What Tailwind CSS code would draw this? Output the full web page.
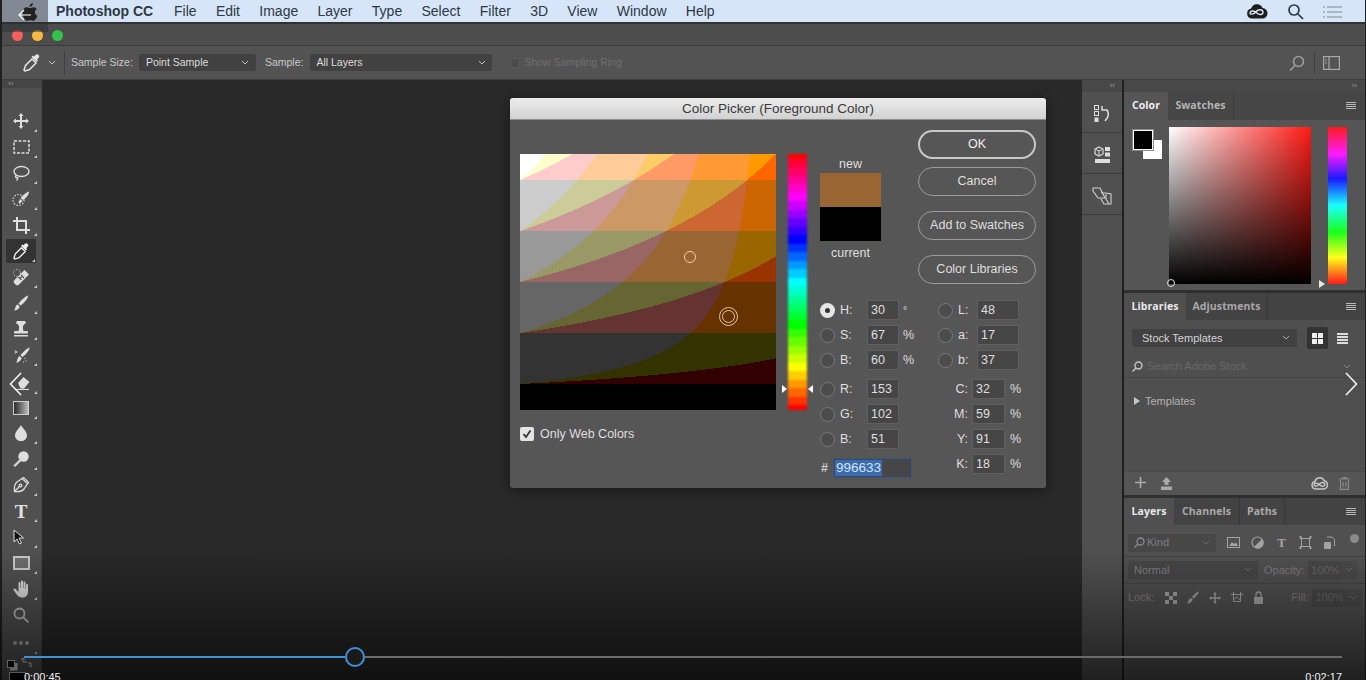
<!doctype html>
<html lang="en">
<head>
<meta charset="utf-8">
<title>Photoshop CC</title>
<script src="https://cdn.jsdelivr.net/npm/@tailwindcss/browser@4"></script>
</head>
<body class="m-0 bg-black">
<div class="relative w-[1366px] h-[680px] overflow-hidden flex flex-col pl-[2px] pr-[1px] bg-[#202020] font-['Liberation_Sans',sans-serif] blur-[0.35px]">

  <!-- macOS menu bar -->
  <header class="h-[24px] shrink-0 flex items-center justify-between pt-[1px] bg-[#d6e5f8] border-b-2 border-[#2f3336] text-[14px] text-[#2d3844]">
    <nav class="flex items-center gap-[19.3px] pl-[54px]">
      <span class="font-bold mr-[1.5px]">Photoshop CC</span>
      <span>File</span><span>Edit</span><span>Image</span><span>Layer</span><span>Type</span><span>Select</span><span>Filter</span><span>3D</span><span>View</span><span>Window</span><span>Help</span>
    </nav>
    <div class="flex items-center gap-[19px] pr-[23px]">
      <svg class="w-[22px] h-[16px]" viewBox="0 0 22 16"><path d="M6 14.5a5 5 0 0 1-.8-9.9A6 6 0 0 1 16.5 4a5.2 5.2 0 0 1-.5 10.5z" fill="#1d1d1d"/><path d="M4 9.5c0-3 4-3.4 6.500-.8s6.500 2.300 6.500-.5-4.500-3.500-7-.5-6 2.800-6 1.800z" fill="none" stroke="#d6e5f8" stroke-width="1.400"/></svg>
      <svg class="w-[17px] h-[17px]" viewBox="0 0 17 17" fill="none" stroke="#2d3844" stroke-width="1.700"><circle cx="7" cy="7" r="5"/><path d="M11 11l5 5"/></svg>
      <svg class="w-[19px] h-[14px]" viewBox="0 0 19 14" stroke="#9aa6b3" stroke-width="1.500"><path d="M0 2h2M4 2h15M0 7h2M4 7h15M0 12h2M4 12h15"/></svg>
    </div>
  </header>

  <!-- window title bar -->
  <div class="h-[22px] shrink-0 flex items-center gap-[9px] pl-[10px] pt-[2px] bg-[#4d4d4d] border-b border-[#393939]">
    <span class="w-[11px] h-[11px] rounded-full bg-[#f55f5b]"></span>
    <span class="w-[11px] h-[11px] rounded-full bg-[#f7b93f]"></span>
    <span class="w-[11px] h-[11px] rounded-full bg-[#35c24a]"></span>
  </div>

  <!-- options bar -->
  <div class="h-[34px] shrink-0 flex items-center bg-[#535353] border-b border-[#3f3f3f] text-[10.5px] text-[#c9c9c9]">
    <svg class="w-[18px] h-[18px] ml-[21px]" viewBox="0 0 18 18"><path d="M11 2.500l1.500-1.500a2 2 0 0 1 3 3L14 5.500l1 1-1.500 1.500-5-5L10 1.500z" fill="#e5e5e5"/><path d="M9 5l-6.500 6.500L1 16l1 1 4.500-1.500L13 9z" fill="none" stroke="#e5e5e5" stroke-width="1.500"/></svg>
    <svg class="w-[8px] h-[6px] ml-[7px]" viewBox="0 0 8 6" fill="none" stroke="#bdbdbd"><path d="M1 1l3 3 3-3"/></svg>
    <span class="w-px h-[24px] bg-[#3e3e3e] ml-[8px]"></span>
    <span class="ml-[6px]">Sample Size:</span>
    <div class="ml-[6px] w-[117px] h-[17px] flex items-center justify-between px-[7px] bg-[#414141] rounded-[2px] text-[#dcdcdc]">Point Sample<svg class="w-[8px] h-[6px]" viewBox="0 0 8 6" fill="none" stroke="#c0c0c0"><path d="M1 1l3 3 3-3"/></svg></div>
    <span class="ml-[9px]">Sample:</span>
    <div class="ml-[7px] w-[182px] h-[17px] flex items-center justify-between px-[6px] bg-[#414141] rounded-[2px] text-[#dcdcdc]">All Layers<svg class="w-[8px] h-[6px]" viewBox="0 0 8 6" fill="none" stroke="#c0c0c0"><path d="M1 1l3 3 3-3"/></svg></div>
    <span class="ml-[18px] w-[10px] h-[10px] rounded-[2px] bg-[#4c4c4c] border border-[#5a5a5a]"></span>
    <span class="ml-[4px] text-[#6f6f6f]">Show Sampling Ring</span>
    <div class="ml-auto flex items-center pr-[25px]">
      <svg class="w-[16px] h-[16px]" viewBox="0 0 16 16" fill="none" stroke="#9c9c9c" stroke-width="1.600"><circle cx="9.500" cy="6.500" r="5"/><path d="M6 10.500L1 15.500"/></svg>
      <span class="w-px h-[22px] bg-[#3e3e3e] ml-[9px]"></span>
      <svg class="w-[17px] h-[14px] ml-[8px]" viewBox="0 0 17 14" fill="none" stroke="#a8a8a8" stroke-width="1.200"><rect x=".6" y=".6" width="15.800" height="12.800"/><path d="M6 .6v12.800"/><path d="M2 4h2M2 7h2" /></svg>
    </div>
  </div>

  <!-- workspace -->
  <main class="flex-1 min-h-0 flex">

    <!-- tool bar -->
    <aside class="w-[40px] shrink-0 bg-[#505050] border-r border-[#454545] flex flex-col items-center">
      <div class="w-full h-[12px] bg-[#454545] flex items-center pl-[6px] text-[8px] leading-none text-[#a0a0a0]">››</div>
      <div class="flex flex-col items-center mt-[16px] pt-[4px] w-[30px] ml-[-1px] text-[#dedede]">
        <div class="relative h-[26px] w-[30px] flex items-center justify-center"><svg class="w-[16px] h-[16px]" viewBox="0 0 16 16" fill="currentColor"><path d="M8 0l2.500 3H9v4h4V5.500L16 8l-3 2.500V9H9v4h1.500L8 16l-2.500-3H7V9H3v1.500L0 8l3-2.500V7h4V3H5.500z"/></svg><i class="absolute right-[-1px] bottom-[2px] border-b-[3px] border-l-[3px] border-b-[#cfcfcf] border-l-transparent"></i></div>
        <div class="relative h-[26px] w-[30px] flex items-center justify-center"><svg class="w-[17px] h-[14px]" viewBox="0 0 17 14" fill="none" stroke="currentColor" stroke-width="1.500" stroke-dasharray="3 1.500"><rect x="1" y="1" width="15" height="12"/></svg><i class="absolute right-[-1px] bottom-[2px] border-b-[3px] border-l-[3px] border-b-[#cfcfcf] border-l-transparent"></i></div>
        <div class="relative h-[26px] w-[30px] flex items-center justify-center"><svg class="w-[18px] h-[16px]" viewBox="0 0 18 16" fill="none" stroke="currentColor" stroke-width="1.400"><ellipse cx="9.500" cy="6.500" rx="7.500" ry="5"/><path d="M4.500 10c-1.500 1-1 3 .5 2.500s.5 2-.5 3"/></svg><i class="absolute right-[-1px] bottom-[2px] border-b-[3px] border-l-[3px] border-b-[#cfcfcf] border-l-transparent"></i></div>
        <div class="relative h-[26px] w-[30px] flex items-center justify-center"><svg class="w-[18px] h-[16px]" viewBox="0 0 18 16"><circle cx="6.500" cy="9" r="5.500" fill="none" stroke="currentColor" stroke-width="1.200" stroke-dasharray="1.500 1.500"/><path d="M17 .5c.5 2-3 7-6 8.500l-2.500-2C11 4 15 1 17 .5z" fill="currentColor"/><path d="M8 8l2.500 2-3 3-1-1.500z" fill="currentColor"/></svg><i class="absolute right-[-1px] bottom-[2px] border-b-[3px] border-l-[3px] border-b-[#cfcfcf] border-l-transparent"></i></div>
        <div class="relative h-[26px] w-[30px] flex items-center justify-center"><svg class="w-[17px] h-[17px]" viewBox="0 0 17 17" fill="none" stroke="currentColor" stroke-width="2"><path d="M0 4h13v13M4 0v13h13"/></svg><i class="absolute right-[-1px] bottom-[2px] border-b-[3px] border-l-[3px] border-b-[#cfcfcf] border-l-transparent"></i></div>
        <div class="relative h-[24px] my-[1px] w-[30px] flex items-center justify-center bg-[#333333] rounded-[1px]"><svg class="w-[17px] h-[17px]" viewBox="0 0 18 18"><path d="M11 2.500l1.500-1.500a2 2 0 0 1 3 3L14 5.500l1 1-1.500 1.500-5-5L10 1.500z" fill="#eee"/><path d="M9 5l-6.500 6.500L1 16l1 1 4.500-1.500L13 9z" fill="none" stroke="#eee" stroke-width="1.500"/></svg><i class="absolute right-[1px] bottom-[1px] border-b-[3px] border-l-[3px] border-b-[#cfcfcf] border-l-transparent"></i></div>
        <div class="relative h-[26px] w-[30px] flex items-center justify-center"><svg class="w-[18px] h-[17px]" viewBox="0 0 18 17"><path d="M12.500 1l4.500 4.500L7 15.500a2.500 2.500 0 0 1-3.500 0l-1-1a2.500 2.500 0 0 1 0-3.500z" fill="currentColor"/><path d="M6.500 8l3 3M9 6l3 3M8 9.500l1.500-1.500" stroke="#505050" stroke-width="1.200"/><circle cx="5" cy="4" r="3.500" fill="none" stroke="currentColor" stroke-dasharray="1 1.500"/></svg><i class="absolute right-[-1px] bottom-[2px] border-b-[3px] border-l-[3px] border-b-[#cfcfcf] border-l-transparent"></i></div>
        <div class="relative h-[26px] w-[30px] flex items-center justify-center"><svg class="w-[16px] h-[16px]" viewBox="0 0 16 16" fill="currentColor"><path d="M15 .5c.5 2-3.500 7.500-7.500 10L5.500 8.500C8 5 13 1 15 .5z"/><path d="M4.700 9.500l2 2c-.5 2.500-3 4-6 4 1.500-1 1.500-2.500 2-4 .3-1 1-1.700 2-2z"/></svg><i class="absolute right-[-1px] bottom-[2px] border-b-[3px] border-l-[3px] border-b-[#cfcfcf] border-l-transparent"></i></div>
        <div class="relative h-[26px] w-[30px] flex items-center justify-center"><svg class="w-[16px] h-[16px]" viewBox="0 0 16 16" fill="currentColor"><path d="M5 0h6a1.500 1.500 0 0 1 .5 3L10 5c-.3 1.500 0 3 .5 5H14a1 1 0 0 1 1 1v1.500H1V11a1 1 0 0 1 1-1h3.500c.5-2 .8-3.500.5-5L4.500 3A1.500 1.500 0 0 1 5 0z"/><rect x="1" y="14" width="14" height="1.500"/></svg><i class="absolute right-[-1px] bottom-[2px] border-b-[3px] border-l-[3px] border-b-[#cfcfcf] border-l-transparent"></i></div>
        <div class="relative h-[26px] w-[30px] flex items-center justify-center"><svg class="w-[17px] h-[17px]" viewBox="0 0 17 17" fill="currentColor"><path d="M16.500.5c.5 2-3.500 7-7 9.500L7.500 8C10 5 14.500 1 16.500.5z"/><path d="M6.700 9l2 2c-.5 2.500-3 4.500-5.700 5 1-1 1-2.500 1.500-4 .3-1.200 1-2.500 2.200-3z"/><path d="M1 3l4 2-4 2 1.500-2z"/><path d="M12 11v1M13 13.500v1M10.500 14.500v1" stroke="currentColor"/></svg><i class="absolute right-[-1px] bottom-[2px] border-b-[3px] border-l-[3px] border-b-[#cfcfcf] border-l-transparent"></i></div>
        <div class="relative h-[28px] w-[30px] flex items-center justify-center pt-[2px]"><svg class="w-[18px] h-[14px]" viewBox="0 0 18 14"><path d="M6 7l5.500-6 6 5L12 12.500H8.500z" fill="currentColor"/><path d="M4 13.500h13" stroke="currentColor" stroke-width="1.200"/></svg><i class="absolute right-[-1px] bottom-[2px] border-b-[3px] border-l-[3px] border-b-[#cfcfcf] border-l-transparent"></i></div>
        <div class="relative h-[24px] w-[30px] flex items-center justify-center"><div class="w-[16px] h-[14px] border border-[#cfcfcf] bg-gradient-to-r from-[#2d2d2d] to-[#bdbdbd]"></div><i class="absolute right-[-1px] bottom-[1px] border-b-[3px] border-l-[3px] border-b-[#cfcfcf] border-l-transparent"></i></div>
        <div class="relative h-[26px] w-[30px] flex items-center justify-center"><svg class="w-[12px] h-[16px]" viewBox="0 0 12 16" fill="currentColor"><path d="M6 0c1 2.500 6 6.500 6 10.500A5.700 5.500 0 0 1 0 10.500C0 6.500 5 2.500 6 0z"/></svg><i class="absolute right-[-1px] bottom-[2px] border-b-[3px] border-l-[3px] border-b-[#cfcfcf] border-l-transparent"></i></div>
        <div class="relative h-[26px] w-[30px] flex items-center justify-center"><svg class="w-[16px] h-[16px]" viewBox="0 0 16 16" fill="currentColor"><circle cx="10.500" cy="5.500" r="5.200"/><path d="M6.500 9L1 14.500l1 1L7.500 10z" stroke="currentColor"/></svg><i class="absolute right-[-1px] bottom-[2px] border-b-[3px] border-l-[3px] border-b-[#cfcfcf] border-l-transparent"></i></div>
        <div class="relative h-[26px] w-[30px] flex items-center justify-center"><svg class="w-[16px] h-[16px]" viewBox="0 0 16 16" fill="none" stroke="currentColor" stroke-width="1.300"><path d="M1.500 14.500C1 10 2 6.500 4 5l5-3.500 5.500 5L11 12c-1.500 2-5 3-9.500 2.500zM1.500 14.500l5-5"/><circle cx="7.500" cy="8.500" r="1.300"/><path d="M9 1.500l1.500-1 5 4.800-.8 1.500" /></svg><i class="absolute right-[-1px] bottom-[2px] border-b-[3px] border-l-[3px] border-b-[#cfcfcf] border-l-transparent"></i></div>
        <div class="relative h-[26px] w-[30px] flex items-center justify-center"><span class="font-['Liberation_Serif',serif] font-bold text-[19px] leading-none text-[#e2e2e2]">T</span><i class="absolute right-[-1px] bottom-[2px] border-b-[3px] border-l-[3px] border-b-[#cfcfcf] border-l-transparent"></i></div>
        <div class="relative h-[26px] w-[30px] flex items-center justify-center"><svg class="w-[13px] h-[16px] -ml-[4px]" viewBox="0 0 13 16"><path d="M1 1v12l3-3 2.500 5 2-1L6 9h4.500z" fill="#111" stroke="#ddd"/></svg><i class="absolute right-[-1px] bottom-[2px] border-b-[3px] border-l-[3px] border-b-[#cfcfcf] border-l-transparent"></i></div>
        <div class="relative h-[26px] w-[30px] flex items-center justify-center"><div class="w-[17px] h-[14px] border-2 border-[#c9c9c9] bg-[#6d6d6d]"></div><i class="absolute right-[-1px] bottom-[2px] border-b-[3px] border-l-[3px] border-b-[#cfcfcf] border-l-transparent"></i></div>
        <div class="relative h-[26px] w-[30px] flex items-center justify-center"><svg class="w-[17px] h-[18px]" viewBox="0 0 17 18" fill="currentColor"><path d="M6.500 2a1 1 0 0 1 1 1v5h.5V1.500a1 1 0 0 1 2 0V8h.5V2.500a1 1 0 0 1 2 0V9h.5V5a1 1 0 0 1 2 0v7c0 3.500-2.500 5.500-5.500 5.500S4.500 16 3 13.500L.5 10a1.200 1.200 0 0 1 2-1.200L5.500 12V3a1 1 0 0 1 1-1z"/></svg><i class="absolute right-[-1px] bottom-[2px] border-b-[3px] border-l-[3px] border-b-[#cfcfcf] border-l-transparent"></i></div>
        <div class="relative h-[26px] w-[30px] flex items-center justify-center"><svg class="w-[16px] h-[16px]" viewBox="0 0 16 16" fill="none" stroke="#bdbdbd" stroke-width="1.800"><circle cx="6.500" cy="6.500" r="5"/><path d="M10.500 10.500l5 5"/></svg></div>
        <div class="relative h-[28px] w-[30px] flex items-center justify-center pt-[2px]"><span class="flex gap-[2px]"><i class="w-[4px] h-[4px] rounded-full bg-[#a8a8a8]"></i><i class="w-[4px] h-[4px] rounded-full bg-[#a8a8a8]"></i><i class="w-[4px] h-[4px] rounded-full bg-[#a8a8a8]"></i></span><i class="absolute right-[-1px] bottom-[2px] border-b-[3px] border-l-[3px] border-b-[#cfcfcf] border-l-transparent"></i></div>
        <div class="w-[30px] flex justify-between items-start pl-[1px] pr-[4px] mt-[1px]">
          <svg class="w-[11px] h-[11px] mt-[3px]" viewBox="0 0 11 11"><rect x="3" y="3" width="7.500" height="7.500" fill="#ddd"/><rect x=".5" y=".5" width="7" height="7" fill="#111" stroke="#ccc"/></svg>
          <svg class="w-[11px] h-[11px]" viewBox="0 0 11 11" fill="none" stroke="#ddd"><path d="M0 3l2-2 2 2M2 1v4h4M7 6h3v2M8 8l2 2 1-2"/></svg>
        </div>
        <div class="w-[17px] h-[10px] bg-black border border-[#ccc] mt-[1px] -ml-[8px]"></div>
      </div>
    </aside>

    <!-- canvas area -->
    <section class="flex-1 min-w-0 bg-[#292929]"></section>

    <!-- collapsed dock -->
    <aside class="w-[40px] shrink-0 bg-[#505050] flex flex-col">
      <div class="h-[12px] bg-[#484848] flex items-center justify-end pr-[7px] text-[8px] leading-none text-[#a0a0a0]">‹‹</div>
      <div class="h-[41px] pt-[3px] border-b border-[#3d3d3d] flex items-center justify-center"><svg class="w-[16px] h-[18px]" viewBox="0 0 16 18"><rect x=".5" y=".5" width="4" height="4" fill="none" stroke="#ddd"/><rect x=".5" y="6.500" width="4" height="4" fill="none" stroke="#ddd"/><rect x=".5" y="12.500" width="4" height="4.500" fill="#ddd"/><path d="M8 1v4h5c2.500 4 1 8-2 11" fill="none" stroke="#ddd" stroke-width="1.500"/></svg></div>
      <div class="h-[41px] pt-[3px] border-b border-[#3d3d3d] flex items-center justify-center"><svg class="w-[17px] h-[17px]" viewBox="0 0 17 17"><path d="M5 1l4 2v5l-4 2-4-2V3z" fill="none" stroke="#ddd" stroke-width="1.200"/><path d="M5 5v4M2 3.500l3 1.500 3-1.500" stroke="#ddd" fill="none"/><rect x="11" y="1" width="5" height="4" fill="#ddd"/><rect x="11" y="6.500" width="5" height="4" fill="#ddd"/><rect x="1" y="13" width="15" height="4" fill="#ddd"/></svg></div>
      <div class="h-[41px] pt-[3px] border-b border-[#3d3d3d] flex items-center justify-center"><svg class="w-[20px] h-[18px]" viewBox="0 0 20 18" fill="none" stroke="#d0d0d0" stroke-width="1.100"><path d="M1 1h7l5 10v0H6L1 4z"/><path d="M9 6h5l5 1v10h-7L9 12"/><path d="M14 7v5l3 5"/></svg></div>
    </aside>

    <!-- panels -->
    <aside class="w-[241px] ml-[2px] shrink-0 bg-[#2f2f2f] flex flex-col text-[#c6c6c6]">
      <div class="h-[12px] bg-[#484848] flex items-center justify-end pr-[8px] text-[8px] leading-none text-[#a0a0a0]">››</div>

      <!-- Color -->
      <section class="h-[198px] bg-[#555555] flex flex-col">
        <div class="h-[28px] shrink-0 flex bg-[#464646] font-['Open_Sans',sans-serif] text-[10.500px] font-bold tracking-[0.1px]">
          <div class="w-[44px] flex items-center justify-center bg-[#555555] text-[#eeeeee]">Color</div>
          <div class="w-[66px] flex items-center justify-center border-r border-[#3c3c3c] text-[#b4b4b4]">Swatches</div>
          <div class="ml-auto pr-[9px] flex items-center"><svg class="w-[10px] h-[8px]" viewBox="0 0 10 8" stroke="#b8b8b8"><path d="M0 .5h10M0 2.500h10M0 4.500h10M0 6.500h10"/></svg></div>
        </div>
        <div class="flex pt-[7px]">
          <div class="relative w-[45px] h-[36px]">
            <div class="absolute left-[19px] top-[13px] w-[19px] h-[19px] bg-white"></div>
            <div class="absolute left-[9px] top-[3px] w-[20px] h-[20px] bg-black border border-white outline outline-[#8a8a8a]"></div>
          </div>
          <div class="relative w-[142px] h-[157px] bg-[linear-gradient(to_bottom,transparent,#000),linear-gradient(to_right,#fff,#ff1a14)]">
            <span class="absolute left-[-2px] bottom-[-3px] w-[8px] h-[8px] rounded-full border border-[#ddd]"></span>
          </div>
          <div class="relative ml-[17px] w-[19px] h-[157px] bg-[linear-gradient(to_bottom,#ff1a1a,#ff1aff_17%,#1a1aff_33%,#1affff_50%,#1aff1a_67%,#ffff1a_83%,#ff1a1a)]">
            <i class="absolute left-[-9px] bottom-[-4px] border-y-[4px] border-l-[6px] border-y-transparent border-l-[#e8e8e8]"></i>
          </div>
        </div>
      </section>

      <!-- Libraries -->
      <section class="h-[202px] mt-[3px] bg-[#4f4f4f] flex flex-col">
        <div class="h-[27px] shrink-0 flex bg-[#434343] font-['Open_Sans',sans-serif] text-[10.500px] font-bold tracking-[0.1px]">
          <div class="w-[62px] flex items-center justify-center bg-[#4f4f4f] text-[#e8e8e8]">Libraries</div>
          <div class="w-[82px] flex items-center justify-center border-r border-[#383838] text-[#a8a8a8]">Adjustments</div>
          <div class="ml-auto pr-[9px] flex items-center"><svg class="w-[10px] h-[8px]" viewBox="0 0 10 8" stroke="#b8b8b8"><path d="M0 .5h10M0 2.500h10M0 4.500h10M0 6.500h10"/></svg></div>
        </div>
        <div class="flex items-center h-[36px] pl-[8px] text-[11px]">
          <div class="w-[165px] h-[18px] flex items-center justify-between pl-[10px] pr-[7px] bg-[#414141] rounded-[2px] text-[#d4d4d4]">Stock Templates<svg class="w-[8px] h-[6px]" viewBox="0 0 8 6" fill="none" stroke="#a8a8a8"><path d="M1 1l3 3 3-3"/></svg></div>
          <div class="ml-[10px] w-[21px] h-[22px] flex items-center justify-center bg-[#333333] rounded-[2px]"><svg class="w-[11px] h-[11px]" viewBox="0 0 11 11" fill="#eee"><rect width="5" height="5"/><rect x="6" width="5" height="5"/><rect y="6" width="5" height="5"/><rect x="6" y="6" width="5" height="5"/></svg></div>
          <svg class="w-[11px] h-[11px] ml-[9px]" viewBox="0 0 11 11" fill="#ddd"><rect width="11" height="2"/><rect y="3" width="11" height="2"/><rect y="6" width="11" height="2"/><rect y="9" width="11" height="2"/></svg>
        </div>
        <div class="h-[22px] border-b border-[#444444] flex items-center pl-[8px] pr-[14px] text-[11px] text-[#686868]">
          <svg class="w-[11px] h-[11px] mr-[4px]" viewBox="0 0 11 11" fill="none" stroke="#c4c4c4" stroke-width="1.400"><circle cx="6.500" cy="4.500" r="3.500"/><path d="M4 7l-3.500 3.500"/></svg>
          Search Adobe Stock
          <svg class="w-[8px] h-[6px] ml-auto" viewBox="0 0 8 6" fill="none" stroke="#888"><path d="M1 1l3 3 3-3"/></svg>
        </div>
        <div class="flex items-center h-[46px] pl-[10px] text-[11px] text-[#b2b2b2]"><i class="border-y-[4px] border-l-[6px] border-y-transparent border-l-[#c4c4c4] mr-[5px]"></i>Templates</div>
        <div class="mt-auto h-[24px] shrink-0 flex items-center px-[11px] bg-[#555555] border-t border-[#4a4a4a]">
          <svg class="w-[13px] h-[13px]" viewBox="0 0 13 13" stroke="#aaa" stroke-width="1.600"><path d="M5.500 0v11M0 5.500h11"/></svg>
          <svg class="w-[13px] h-[13px] ml-[12px]" viewBox="0 0 13 13" fill="#aaa"><path d="M6.500 0l4.500 5H8.500v3h-4V5H2zM1 9.500h11V13H1z"/></svg>
          <svg class="w-[17px] h-[13px] ml-auto" viewBox="0 0 17 13" fill="none" stroke="#c8c8c8" stroke-width="1.400"><path d="M4.500 12a3.800 3.800 0 0 1-.5-7.500A4.800 4.800 0 0 1 13 3.500 4.300 4.300 0 0 1 12.500 12z"/><path d="M3 8c0-2 3-2.500 5.500-.3S14 9.500 14 7.500 11 4.500 8.500 7 4 10 3 8z"/></svg>
          <svg class="w-[11px] h-[13px] ml-[11px] mr-[4px]" viewBox="0 0 11 13" fill="none" stroke="#8a8a8a" stroke-width="1.200"><path d="M1.500 3v9.400h8V3M0 2h11M4 2V.6h3V2M4 5v5M7 5v5"/></svg>
        </div>
      </section>

      <!-- Layers -->
      <section class="flex-1 mt-[3px] bg-[#505050] flex flex-col text-[11px] text-[#7d7d7d]">
        <div class="h-[27px] shrink-0 flex bg-[#434343] font-['Open_Sans',sans-serif] text-[10.500px] font-bold tracking-[0.1px]">
          <div class="w-[50px] flex items-center justify-center bg-[#505050] text-[#e8e8e8]">Layers</div>
          <div class="w-[66px] flex items-center justify-center border-r border-[#383838] text-[#aaaaaa]">Channels</div>
          <div class="w-[45px] flex items-center justify-center border-r border-[#383838] text-[#aaaaaa]">Paths</div>
          <div class="ml-auto pr-[9px] flex items-center"><svg class="w-[10px] h-[8px]" viewBox="0 0 10 8" stroke="#b8b8b8"><path d="M0 .5h10M0 2.500h10M0 4.500h10M0 6.500h10"/></svg></div>
        </div>
        <div class="relative flex items-center h-[32px] pt-[4px] pl-[4px] border-b border-[#454545]">
          <div class="w-[88px] h-[18px] flex items-center justify-between px-[6px] bg-[#474747] rounded-[2px] text-[#7f7f7f]"><span class="flex items-center gap-[2px]"><svg class="w-[11px] h-[11px]" viewBox="0 0 11 11" fill="none" stroke="#8c8c8c" stroke-width="1.300"><circle cx="6.500" cy="4.500" r="3.500"/><path d="M4 7l-3.500 3.500"/></svg>Kind</span><svg class="w-[8px] h-[6px]" viewBox="0 0 8 6" fill="none" stroke="#6c6c6c"><path d="M1 1l3 3 3-3"/></svg></div>
          <div class="flex items-center ml-[11px] gap-[11px] text-[#a3a3a3]">
            <svg class="w-[13px] h-[11px]" viewBox="0 0 13 11"><rect x=".5" y=".5" width="12" height="10" fill="none" stroke="#a3a3a3"/><path d="M2 9l3-4 2 2 2-1.500L11 9z" fill="#a3a3a3"/></svg>
            <svg class="w-[13px] h-[13px]" viewBox="0 0 13 13"><circle cx="6.500" cy="6.500" r="5.500" fill="none" stroke="#a3a3a3" stroke-width="1.200"/><path d="M11 3a5.500 5.500 0 0 1-8 8z" fill="#a3a3a3"/></svg>
            <span class="font-['Liberation_Serif',serif] font-bold text-[13px] w-[13px] text-center leading-none">T</span>
            <svg class="w-[13px] h-[13px]" viewBox="0 0 13 13" fill="none" stroke="#a3a3a3"><rect x="2.500" y="2.500" width="8" height="8"/><path d="M0 1h3M1.500 0v3M10 1h3M11.500 0v3M0 12h3M1.500 10v3M10 12h3M11.500 10v3"/></svg>
            <svg class="w-[12px] h-[14px]" viewBox="0 0 12 14"><path d="M4 1h5l2.500 2.500V10" fill="none" stroke="#a3a3a3"/><rect x="1" y="6" width="7" height="7" rx="1" fill="#a3a3a3"/></svg>
          </div>
          <div class="absolute right-[6px] top-[9px] w-[9px] h-[9px] rounded-full bg-[#8a8a8a]"></div>
        </div>
        <div class="flex items-center h-[27px] pl-[4px] border-b border-[#454545]">
          <div class="w-[130px] h-[18px] flex items-center justify-between px-[6px] bg-[#474747] rounded-[2px] text-[#7f7f7f]">Normal<svg class="w-[8px] h-[6px]" viewBox="0 0 8 6" fill="none" stroke="#6c6c6c"><path d="M1 1l3 3 3-3"/></svg></div>
          <span class="ml-[6px]">Opacity:</span>
          <div class="ml-[4px] w-[33px] h-[18px] flex items-center pl-[3px] bg-[#474747] text-[#666]">100%</div>
          <div class="w-[16px] h-[18px] flex items-center justify-center bg-[#4a4a4a]"><svg class="w-[8px] h-[6px]" viewBox="0 0 8 6" fill="none" stroke="#6c6c6c"><path d="M1 1l3 3 3-3"/></svg></div>
        </div>
        <div class="flex items-center h-[27px] pl-[4px]">
          <span>Lock:</span>
          <div class="flex items-center ml-[11px] gap-[10px]">
            <svg class="w-[12px] h-[12px]" viewBox="0 0 12 12" fill="#a3a3a3"><rect width="4" height="4"/><rect x="8" width="4" height="4"/><rect x="4" y="4" width="4" height="4"/><rect y="8" width="4" height="4"/><rect x="8" y="8" width="4" height="4"/></svg>
            <svg class="w-[12px] h-[13px]" viewBox="0 0 12 13" fill="#a3a3a3"><path d="M11.500.5c.3 1.500-2.500 5-5 7L5 6c2-2.500 5-5 6.500-5.500z"/><path d="M4 7l1.800 1.500C5.500 10.500 3 12.500 0 12.800c1-.8 1.200-2 1.500-3.300C2 8.300 3 7.500 4 7z"/></svg>
            <svg class="w-[12px] h-[12px]" viewBox="0 0 16 16" fill="#a3a3a3"><path d="M8 0l2.500 3H9v4h4V5.500L16 8l-3 2.500V9H9v4h1.500L8 16l-2.500-3H7V9H3v1.500L0 8l3-2.500V7h4V3H5.500z"/></svg>
            <svg class="w-[12px] h-[12px]" viewBox="0 0 12 12" fill="none" stroke="#a3a3a3"><rect x="2.500" y="2.500" width="7" height="7"/><path d="M0 2.500h2M2.500 0v2M10 2.500h2M9.500 0v2M3 7l3-2 3 3"/></svg>
            <svg class="w-[11px] h-[13px]" viewBox="0 0 11 13"><path d="M3 6V3.500a2.500 2.500 0 0 1 5 0V6" fill="none" stroke="#a3a3a3" stroke-width="1.300"/><rect x="1" y="6" width="9" height="7" fill="#a3a3a3"/></svg>
          </div>
          <span class="ml-[27px]">Fill:</span>
          <div class="ml-[4px] w-[33px] h-[18px] flex items-center pl-[3px] bg-[#474747] text-[#666]">100%</div>
          <div class="w-[16px] h-[18px] flex items-center justify-center bg-[#4a4a4a]"><svg class="w-[8px] h-[6px]" viewBox="0 0 8 6" fill="none" stroke="#6c6c6c"><path d="M1 1l3 3 3-3"/></svg></div>
        </div>
      </section>
    </aside>
  </main>

  <!-- Color Picker dialog -->
  <div class="absolute left-[510px] top-[98px] w-[536px] h-[390px] bg-[#565656] rounded-[3px] flex flex-col shadow-[0_2px_12px_rgba(0,0,0,0.45)] text-[12.5px] text-[#dfdfdf]">
    <div class="h-[22px] shrink-0 flex items-center justify-center pt-[1px] rounded-t-[3px] bg-gradient-to-b from-[#ececec] to-[#d2d2d2] border-b border-[#8e8e8e] text-[13.5px] text-[#3a3a3a]">Color Picker (Foreground Color)</div>
    <div class="flex flex-1 min-h-0">
      <div class="flex flex-col pl-[10px] pt-[34px] w-[310px]">
        <div class="flex items-start">
          <div class="relative w-[256px] h-[256px]">
            <canvas id="field" width="256" height="256" class="block w-[256px] h-[256px] blur-[0.3px]"></canvas>
            <span class="absolute left-[164px] top-[97px] w-[12px] h-[12px] rounded-full border border-[#f0d0a8]"></span>
            <span class="absolute left-[199px] top-[153px] w-[19px] h-[19px] rounded-full border border-[#e0c4a8] flex items-center justify-center"><i class="w-[13px] h-[13px] rounded-full border border-[#e0c4a8]"></i></span>
          </div>
          <div class="relative ml-[12px] w-[19px] h-[256px]">
            <canvas id="hue" width="19" height="256" class="block w-[19px] h-[256px] blur-[1px]"></canvas>
            <i class="absolute left-[-6px] top-[231px] border-y-[4px] border-l-[5px] border-y-transparent border-l-white"></i>
            <i class="absolute right-[-6px] top-[231px] border-y-[4px] border-r-[5px] border-y-transparent border-r-white"></i>
          </div>
        </div>
        <label class="flex items-center mt-[15px] gap-[6px]">
          <span class="w-[14px] h-[14px] rounded-[2px] bg-[#e4e4e4] flex items-center justify-center"><svg class="w-[10px] h-[10px]" viewBox="0 0 10 10" fill="none" stroke="#333" stroke-width="1.800"><path d="M1.500 5l2.500 3 4.500-6.500"/></svg></span>
          Only Web Colors
        </label>
      </div>

      <div class="flex-1 flex flex-col pt-[10px]">
        <div class="flex h-[170px]">
          <div class="w-[61px] flex flex-col items-center pt-[27px]">
            <span class="h-[16px] leading-[14px]">new</span>
            <div class="w-[61px] h-[34px] bg-[#996633]"></div>
            <div class="w-[61px] h-[34px] bg-black"></div>
            <span class="mt-[5px] leading-[14px]">current</span>
          </div>
          <div class="ml-[37px] w-[118px] flex flex-col">
            <div class="h-[29px] flex items-center justify-center rounded-full border-2 border-[#c8c8c8] text-[#eeeeee]">OK</div>
            <div class="h-[29px] mt-[8px] flex items-center justify-center rounded-full border border-[#9c9c9c]">Cancel</div>
            <div class="h-[29px] mt-[15px] flex items-center justify-center rounded-full border border-[#9c9c9c]">Add to Swatches</div>
            <div class="h-[29px] mt-[15px] flex items-center justify-center rounded-full border border-[#9c9c9c]">Color Libraries</div>
          </div>
        </div>

        <div class="flex">
          <div class="w-[118px] flex flex-col">
            <div class="flex items-center h-[20px] gap-[5px]"><span class="w-[15px] h-[15px] rounded-full bg-[#e6e6e6] flex items-center justify-center"><i class="w-[5px] h-[5px] rounded-full bg-[#333]"></i></span><span class="w-[22px]">H:</span><span class="w-[32px] h-[20px] pl-[3px] flex items-center bg-[#464646] border border-[#5f5f5f]">30</span><span class="ml-[-1px] text-[10px]">°</span></div>
            <div class="flex items-center h-[20px] mt-[5px] gap-[5px]"><span class="w-[15px] h-[15px] rounded-full border border-[#797979] bg-[#4c4c4c]"></span><span class="w-[22px]">S:</span><span class="w-[32px] h-[20px] pl-[3px] flex items-center bg-[#464646] border border-[#5f5f5f]">67</span><span class="ml-[-1px]">%</span></div>
            <div class="flex items-center h-[20px] mt-[5px] gap-[5px]"><span class="w-[15px] h-[15px] rounded-full border border-[#797979] bg-[#4c4c4c]"></span><span class="w-[22px]">B:</span><span class="w-[32px] h-[20px] pl-[3px] flex items-center bg-[#464646] border border-[#5f5f5f]">60</span><span class="ml-[-1px]">%</span></div>
            <div class="flex items-center h-[20px] mt-[9px] gap-[5px]"><span class="w-[15px] h-[15px] rounded-full border border-[#797979] bg-[#4c4c4c]"></span><span class="w-[22px]">R:</span><span class="w-[32px] h-[20px] pl-[3px] flex items-center bg-[#464646] border border-[#5f5f5f]">153</span></div>
            <div class="flex items-center h-[20px] mt-[5px] gap-[5px]"><span class="w-[15px] h-[15px] rounded-full border border-[#797979] bg-[#4c4c4c]"></span><span class="w-[22px]">G:</span><span class="w-[32px] h-[20px] pl-[3px] flex items-center bg-[#464646] border border-[#5f5f5f]">102</span></div>
            <div class="flex items-center h-[20px] mt-[5px] gap-[5px]"><span class="w-[15px] h-[15px] rounded-full border border-[#797979] bg-[#4c4c4c]"></span><span class="w-[22px]">B:</span><span class="w-[32px] h-[20px] pl-[3px] flex items-center bg-[#464646] border border-[#5f5f5f]">51</span></div>
            <div class="flex items-center h-[20px] mt-[9px]"><span class="w-[13px] pl-[1px] text-[#c8c8c8] font-bold">#</span><span class="w-[79px] h-[20px] flex items-center pl-[1px] bg-[#464646] border border-[#36558a]"><span class="bg-[#3c6cb0] text-[#d3e3f8] px-[1px] text-[13.500px] leading-[16px]">996633</span></span></div>
          </div>
          <div class="flex flex-col">
            <div class="flex items-center h-[20px] gap-[5px]"><span class="w-[15px] h-[15px] rounded-full border border-[#797979] bg-[#4c4c4c]"></span><span class="w-[14px]">L:</span><span class="w-[42px] h-[20px] pl-[3px] flex items-center bg-[#464646] border border-[#5f5f5f]">48</span></div>
            <div class="flex items-center h-[20px] mt-[5px] gap-[5px]"><span class="w-[15px] h-[15px] rounded-full border border-[#797979] bg-[#4c4c4c]"></span><span class="w-[14px]">a:</span><span class="w-[42px] h-[20px] pl-[3px] flex items-center bg-[#464646] border border-[#5f5f5f]">17</span></div>
            <div class="flex items-center h-[20px] mt-[5px] gap-[5px]"><span class="w-[15px] h-[15px] rounded-full border border-[#797979] bg-[#4c4c4c]"></span><span class="w-[14px]">b:</span><span class="w-[42px] h-[20px] pl-[3px] flex items-center bg-[#464646] border border-[#5f5f5f]">37</span></div>
            <div class="flex items-center h-[20px] mt-[9px]"><span class="w-[30px] text-right mr-[4px]">C:</span><span class="w-[33px] h-[20px] pl-[3px] flex items-center bg-[#464646] border border-[#5f5f5f]">32</span><span class="ml-[5px]">%</span></div>
            <div class="flex items-center h-[20px] mt-[5px]"><span class="w-[30px] text-right mr-[4px]">M:</span><span class="w-[33px] h-[20px] pl-[3px] flex items-center bg-[#464646] border border-[#5f5f5f]">59</span><span class="ml-[5px]">%</span></div>
            <div class="flex items-center h-[20px] mt-[5px]"><span class="w-[30px] text-right mr-[4px]">Y:</span><span class="w-[33px] h-[20px] pl-[3px] flex items-center bg-[#464646] border border-[#5f5f5f]">91</span><span class="ml-[5px]">%</span></div>
            <div class="flex items-center h-[20px] mt-[5px]"><span class="w-[30px] text-right mr-[4px]">K:</span><span class="w-[33px] h-[20px] pl-[3px] flex items-center bg-[#464646] border border-[#5f5f5f]">18</span><span class="ml-[5px]">%</span></div>
          </div>
        </div>
      </div>
    </div>
  </div>

  <!-- video overlay: darkening, back tint, arrows and seek bar -->
  <div class="absolute inset-x-0 bottom-0 h-[130px] bg-gradient-to-b from-transparent to-black/60 pointer-events-none"></div>
  <div class="absolute left-[2px] top-0 w-[46px] h-[32px] bg-[#2a2d30]/50 flex items-center justify-center">
    <svg class="absolute left-[20px] top-[3px] w-[16px] h-[18px]" viewBox="0 0 16 18" fill="#222"><path d="M11 0c.2 2-1.600 4-3.500 3.800C7.300 2 9 .2 11 0zM8 5c1 0 2-.8 3.500-.8 1.300 0 2.500.6 3.300 1.800-2.800 1.700-2.300 5.600.7 6.700-1 2.500-2.600 5-4 5-1.200 0-1.700-.8-3.200-.8s-2 .8-3.200.8C3 17.700.5 13.500.5 9.700.5 6 3 4.200 5 4.200 6.300 4.200 7.200 5 8 5z"/></svg>
    <svg class="absolute left-[16px] top-[9px] w-[14px] h-[12px]" viewBox="0 0 14 12" fill="none" stroke="#fff" stroke-width="1.200"><path d="M6 1L1 6l5 5M1 6h12"/></svg>
  </div>
  <svg class="absolute left-[9px] top-[372px] w-[13px] h-[24px]" viewBox="0 0 13 24" fill="none" stroke="#f2f2f2" stroke-width="1.600"><path d="M12 1L1.500 12 12 23"/></svg>
  <svg class="absolute left-[1345px] top-[372px] w-[13px] h-[24px]" viewBox="0 0 13 24" fill="none" stroke="#f2f2f2" stroke-width="1.600"><path d="M1 1l10.500 11L1 23"/></svg>

  <div class="absolute left-[24px] top-[656px] w-[321px] h-[2px] bg-[#3f92d8]"></div>
  <div class="absolute left-[355px] top-[656px] w-[987px] h-[2px] bg-[#6a6a6a]"></div>
  <div class="absolute left-[345px] top-[647px] w-[20px] h-[20px] rounded-full border-2 border-[#3f92d8] bg-[#191919]"></div>
  <span class="absolute left-[24px] top-[671px] text-[11px] leading-[12px] text-[#f0f0f0]">0:00:45</span>
  <span class="absolute right-[24px] top-[671px] text-[11px] leading-[12px] text-[#f0f0f0]">0:02:17</span>
</div>

<script>
  const snap = v => Math.round(v * 5) / 5 * 255;
  const f = document.getElementById('field').getContext('2d');
  for (let y = 0; y < 256; y++) {
    for (let x = 0; x < 256; x++) {
      const s = x / 255, v = 1 - y / 255;
      f.fillStyle = `rgb(${snap(v)},${snap(v * (1 - s / 2))},${snap(v * (1 - s))})`;
      f.fillRect(x, y, 1, 1);
    }
  }
  const h = document.getElementById('hue').getContext('2d');
  for (let y = 0; y < 256; y++) {
    const d = 360 * (1 - y / 255) / 60, c = 1 - Math.abs(d % 2 - 1);
    const t = [[1,c,0],[c,1,0],[0,1,c],[0,c,1],[c,0,1],[1,0,c]][Math.floor(d) % 6];
    h.fillStyle = `rgb(${snap(t[0])},${snap(t[1])},${snap(t[2])})`;
    h.fillRect(0, y, 19, 1);
  }
</script>
</body>
</html>
